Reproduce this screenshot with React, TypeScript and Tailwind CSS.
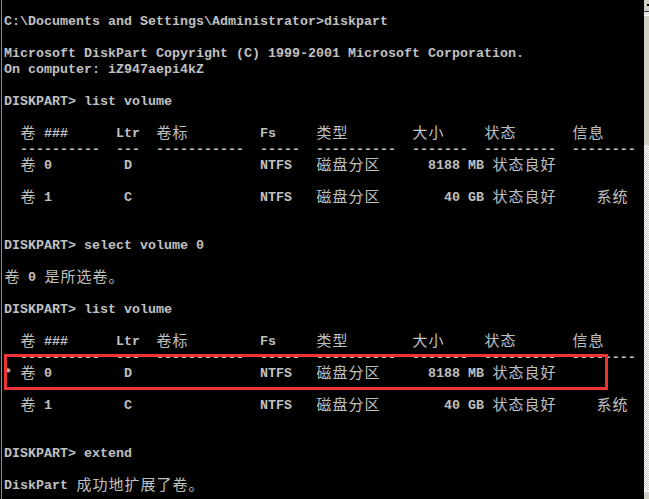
import React from "react";

const cw = (s: string) =>
  [...s].reduce((a, c) => a + (c.charCodeAt(0) > 0x2e80 ? 2 : 1), 0);

function at(parts: [number, string][]): string {
  let s = "";
  let c = 0;
  for (const [p, t] of parts) {
    if (p > c) s += " ".repeat(p - c);
    s += t;
    c = Math.max(c, p) + cw(t);
  }
  return s;
}

const HEADER = at([
  [2, "卷"],
  [5, "###"],
  [14, "Ltr"],
  [19, "卷标"],
  [32, "Fs"],
  [39, "类型"],
  [51, "大小"],
  [60, "状态"],
  [71, "信息"],
]);
const DASH = at([
  [2, "----------"],
  [14, "---"],
  [19, "-----------"],
  [32, "-----"],
  [39, "----------"],
  [51, "-------"],
  [60, "---------"],
  [71, "--------"],
]);
const ROW0 = at([
  [2, "卷"],
  [5, "0"],
  [15, "D"],
  [32, "NTFS"],
  [39, "磁盘分区"],
  [53, "8188 MB"],
  [61, "状态良好"],
]);
const ROW0SEL = at([
  [0, "*"],
  [2, "卷"],
  [5, "0"],
  [15, "D"],
  [32, "NTFS"],
  [39, "磁盘分区"],
  [53, "8188 MB"],
  [61, "状态良好"],
]);
const ROW1 = at([
  [2, "卷"],
  [5, "1"],
  [15, "C"],
  [32, "NTFS"],
  [39, "磁盘分区"],
  [55, "40 GB"],
  [61, "状态良好"],
  [74, "系统"],
]);

const LINES: string[] = [
  "C:\\Documents and Settings\\Administrator>diskpart",
  "",
  "Microsoft DiskPart Copyright (C) 1999-2001 Microsoft Corporation.",
  "On computer: iZ947aepi4kZ",
  "",
  "DISKPART> list volume",
  "",
  HEADER,
  DASH,
  ROW0,
  "",
  ROW1,
  "",
  "",
  "DISKPART> select volume 0",
  "",
  "卷 0 是所选卷。",
  "",
  "DISKPART> list volume",
  "",
  HEADER,
  DASH,
  ROW0SEL,
  "",
  ROW1,
  "",
  "",
  "DISKPART> extend",
  "",
  "DiskPart 成功地扩展了卷。",
  "",
];

function Ascii({ t }: { t: string }) {
  return (
    <span className="inline-block h-4 align-top pt-[3px] leading-[14px] whitespace-pre">
      {t}
    </span>
  );
}

function Line({ text }: { text: string }) {
  const out: React.ReactNode[] = [];
  let buf = "";
  let k = 0;
  for (const ch of text) {
    if (ch.charCodeAt(0) > 0x2e80) {
      if (buf) {
        out.push(<Ascii key={k++} t={buf} />);
        buf = "";
      }
      out.push(
        <span
          key={k++}
          className="inline-block w-4 h-4 text-center align-top text-[15px] leading-4 font-normal [font-family:'Noto_Sans_CJK_SC',sans-serif]"
        >
          {ch}
        </span>
      );
    } else {
      buf += ch;
    }
  }
  if (buf) out.push(<Ascii key={k++} t={buf} />);
  return <div className="h-4 leading-4 whitespace-pre">{out}</div>;
}

export default function App() {
  return (
    <div className="relative flex w-[649px] h-[499px] overflow-hidden bg-black">
      <div className="w-px bg-black" />
      <div className="w-px bg-[#8c8c8c]" />
      <div className="flex-1 pl-[2px] pt-[12px] text-[#c0c0c0] text-[13.333px] font-bold [font-family:'Liberation_Mono',monospace]">
        {LINES.map((l, i) => (
          <Line key={i} text={l} />
        ))}
      </div>
      <div className="flex w-[5px] flex-col bg-[repeating-conic-gradient(#d4d0c8_0%_25%,#ffffff_0%_50%)] bg-[length:2px_2px]">
        <div className="relative h-[11px] bg-[#d4d0c8]">
          <div className="absolute left-[3px] top-[4px] h-[2px] w-[2px] bg-black" />
        </div>
        <div className="h-px bg-[#404040]" />
        <div className="mt-[3px] h-[130px] bg-[#d4d0c8] border-t border-white" />
        <div className="flex-1" />
        <div className="h-[8px] border-t border-white bg-[#d4d0c8]" />
      </div>
      <div className="absolute left-[4px] top-[354px] h-[36px] w-[604px] border-[3px] border-[#ee3333]" />
    </div>
  );
}
